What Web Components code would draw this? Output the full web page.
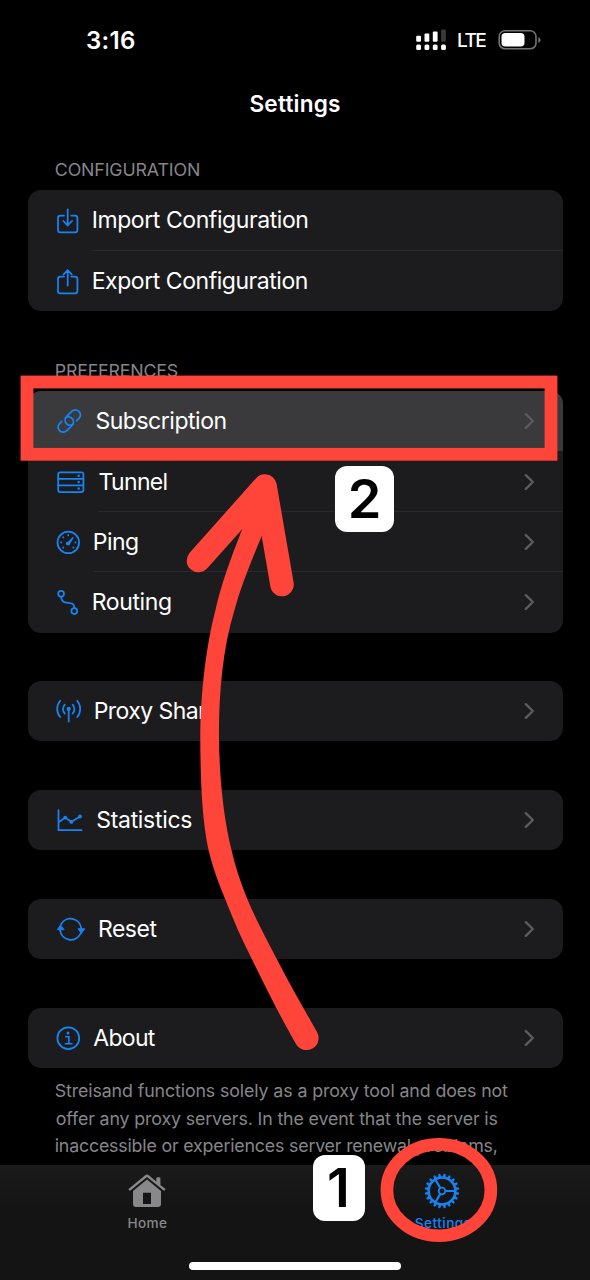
<!DOCTYPE html>
<html lang="en">
<head>
<meta charset="utf-8">
<title>Settings</title>
<style>
html,body{margin:0;background:#000}
body{width:590px;height:1280px;overflow:hidden;font-family:Inter,"Liberation Sans",sans-serif;color:#fff}
</style>
</head>
<body>
<settings-app></settings-app>
<script>
const define=(name,html,setup)=>customElements.define(name,class extends HTMLElement{
  connectedCallback(){
    if(this.shadowRoot)return;
    const t=document.createElement('template');
    t.innerHTML=typeof html==='function'?html(this):html;
    this.attachShadow({mode:'open'}).append(t.content.cloneNode(true));
    if(setup)setup(this);
  }
});

/* A single line of text tracked so that its glyphs span the given width. */
const ctx=document.createElement('canvas').getContext('2d');
define('fit-text',`<style>:host{display:block;white-space:nowrap}span{display:inline-block}</style><span><slot></slot></span>`,el=>{
  const cs=getComputedStyle(el),text=el.textContent;
  ctx.font=`${cs.fontWeight} ${cs.fontSize} ${cs.fontFamily}`;
  const m=ctx.measureText(text),ink=m.actualBoundingBoxLeft+m.actualBoundingBoxRight;
  const span=el.shadowRoot.querySelector('span');
  if(text.length>1)span.style.letterSpacing=((+el.getAttribute('width')-.9-ink)/(text.length-1))+'px';
  span.style.marginLeft=(m.actualBoundingBoxLeft+.7)+'px';
  el.style.width=el.getAttribute('width')+'px';
});

const gearTeeth=Array.from({length:20},(_,i)=>`<path d="M17.5 4.8 18.1 1.7H19.9L20.5 4.8Z" transform="rotate(${i*18+9} 19 19)"/>`).join('');
const tick=[-135,-90,-45,0,90,135].map(a=>`<circle cx="14.3" cy="8.2" r=".95" transform="rotate(${a} 14.3 15.4)" fill="currentColor" stroke="none"/>`).join('');
const icons={
 import:'<path d="M10 10.6H6.4Q4 10.6 4 13V25Q4 27.4 6.4 27.4H21Q23.4 27.4 23.4 25V13Q23.4 10.6 21 10.6H17.3M13.7 4.3V20M9.4 16 13.7 20.4 18 16"/>',
 export:'<path d="M10 10.6H6.4Q4 10.6 4 13V25Q4 27.4 6.4 27.4H21Q23.4 27.4 23.4 25V13Q23.4 10.6 21 10.6H17.3M13.7 19.6V4.2M9.6 8.4 13.7 4.2 17.8 8.4"/>',
 link:'<path transform="translate(18.7 11.5) rotate(-45)" d="M.6 5.1H3.7A5.1 5.1 0 0 0 3.7-5.1H-3.7A5.1 5.1 0 0 0-4.6 5"/><path transform="translate(11.8 18.5) rotate(135)" d="M.6 5.1H3.7A5.1 5.1 0 0 0 3.7-5.1H-3.7A5.1 5.1 0 0 0-4.6 5"/>',
 server:'<rect x="4.2" y="5.4" width="25.2" height="19.6" rx="2"/><path d="M4.2 11.9H29.4M4.2 18.3H29.4"/><g fill="currentColor" stroke="none"><circle cx="24.7" cy="8.7" r="1.25"/><circle cx="24.7" cy="15.1" r="1.25"/><circle cx="24.7" cy="21.6" r="1.25"/></g>',
 gauge:'<circle cx="14.3" cy="15.4" r="10.8"/>'+tick+'<path d="M12.6 17 19 10.6 14.8 18Z" fill="currentColor" stroke-width="1.2" stroke-linejoin="round"/><circle cx="13.5" cy="16.4" r="1.6" fill="currentColor" stroke="none"/>',
 route:'<circle cx="7.1" cy="6.7" r="2.9"/><circle cx="20.3" cy="24.1" r="2.9"/><path d="M7.2 9.8C7.4 20.5 20.2 11.2 20.5 21"/>',
 antenna:'<circle cx="14.7" cy="12.9" r="2.1" fill="currentColor" stroke="none"/><path d="M14.7 13V25.6M10.8 8.7A6.4 6.4 0 0 0 10.8 17.6M18.6 8.7A6.4 6.4 0 0 1 18.6 17.6M6.2 4.8A12.5 12.5 0 0 0 6.2 21M23.2 4.8A12.5 12.5 0 0 1 23.2 21"/>',
 chart:'<path d="M4.5 5.2V25.2H27.6M5 17 11.3 12.6 17.3 16.9 26 11.5"/><g fill="currentColor" stroke="none"><circle cx="11.3" cy="12.6" r="1.9"/><circle cx="17.3" cy="16.9" r="1.9"/><circle cx="26" cy="11.5" r="1.9"/></g>',
 reset:'<path d="M7 10.4A10.8 10.8 0 0 1 27.2 14M26.4 19.9A10.8 10.8 0 0 1 6.1 16.4"/><path d="M6.4 11.2 3.4 15.7H9.8ZM27.2 19.4 24.2 14.7H30.4Z" fill="currentColor" stroke-width=".9" stroke-linejoin="round"/>',
 info:'<circle cx="14.3" cy="15.2" r="10.9"/><circle cx="14" cy="9.9" r="1.5" fill="currentColor" stroke="none"/><path d="M11.7 13.8H14.9V20.6M11.3 20.7H18" stroke-width="1.6"/>'
};
define('row-icon',el=>`<style>:host{display:block;width:36px;height:30px;color:#1784f5}svg{display:block;overflow:visible;fill:none;stroke:currentColor;stroke-width:1.75;stroke-linecap:round}</style><svg width="36" height="30">${icons[el.getAttribute('name')]}</svg>`);

define('settings-row',el=>`<style>
:host{display:grid;grid-template-columns:26.5px var(--label) 1fr auto;align-items:center;height:60.35px;font-size:23px;line-height:30px;background:linear-gradient(#29292b,#29292b) no-repeat var(--rule,700px) 100%/100% 1px}
:host([pressed]){background:#3a3a3c}
.chev{display:block;margin-right:28px}
</style><span></span><row-icon name="${el.getAttribute('icon')}"></row-icon><fit-text width="${el.getAttribute('w')}">${el.getAttribute('label')}</fit-text>${el.hasAttribute('nav')?'<svg class="chev" width="11" height="18" fill="none" stroke="#5b5b5f" stroke-width="2.4" stroke-linecap="round" stroke-linejoin="round"><path d="M1.8 2.2 8.8 9 1.8 15.8"/></svg>':''}`,el=>{
  const x=+el.getAttribute('x');
  el.style.setProperty('--label',(x-54)+'px');
  if(el.hasAttribute('ruled'))el.style.setProperty('--rule',Math.floor(x-28.5)+'px');
});
define('settings-card',`<style>:host{display:block;margin:0 27.5px 48.65px;border-radius:13px;overflow:hidden;background:#1c1c1e}</style><slot></slot>`);
define('section-title',`<style>:host{display:block;padding-left:55.1px;height:31px;font-size:17.8px;line-height:22px;color:#86868a}</style><slot></slot>`);

define('status-bar',`<style>
:host{display:flex;height:80px;box-sizing:border-box;padding:26px 48.6px 0 86.3px;align-items:flex-start}
.time{font-size:24px;font-weight:600;line-height:29px}
.lte{font-size:19.2px;font-weight:500;line-height:29px;margin:0 12px 0 10.6px}
svg{display:block}
</style><fit-text class="time" width="49">3:16</fit-text>
<svg width="31" height="29" fill="#fff" style="margin-left:auto"><rect x=".2" y="9.8" width="4.8" height="6" rx="1"/><rect x="8.5" y="7.6" width="4.8" height="8.2" rx="1"/><rect x="16.8" y="5.6" width="4.8" height="10.2" rx="1"/><rect x="25.1" y="3.4" width="4.8" height="12.4" rx="1" fill="#38383a"/><rect x=".2" y="18.4" width="4.8" height="5.5" rx="1.5"/><rect x="8.5" y="18.4" width="4.8" height="5.5" rx="1.5"/><rect x="16.8" y="18.4" width="4.8" height="5.5" rx="1.5"/><rect x="25.1" y="18.4" width="4.8" height="5.5" rx="1.5"/></svg>
<fit-text class="lte" width="29">LTE</fit-text>
<svg width="43" height="29"><rect x="1.2" y="4.8" width="36.8" height="18" rx="5.8" fill="none" stroke="#737375" stroke-width="1.6"/><rect x="3.5" y="7" width="23" height="13.5" rx="3.8" fill="#fff"/><path d="M40.3 11Q42.6 12.2 42.6 14T40.3 17Z" fill="#737375"/></svg>`);

define('tab-item',el=>`<style>:host{display:flex;flex-direction:column;align-items:center;font-size:13.6px;font-weight:500;line-height:17px}svg{display:block;margin:0 1.4px 4.5px 0;overflow:visible}</style>${el.getAttribute('icon')==='home'?
'<svg width="38" height="38" fill="#88888a"><path d="M.8 16.8 17.2 3.2Q19 1.8 20.8 3.2L28.3 9.5V6.2Q28.3 5.2 29.3 5.2H31.4Q32.4 5.2 32.4 6.2V12.9L37.2 16.8Q37.8 17.4 37.2 18Q36.3 19 35.3 18.3L19 5.1 2.7 18.3Q1.7 19 .8 18Q.2 17.4.8 16.8Z"/><path fill-rule="evenodd" d="M19 7.6 33 19V31.7Q33 34.9 29.8 34.9H8.2Q5 34.9 5 31.7V19ZM15 20.7V32H23V20.7Z"/></svg>':
`<svg width="38" height="38" fill="currentColor"><circle cx="19" cy="19" r="13.4" fill="none" stroke="currentColor" stroke-width="2.5"/>${gearTeeth}<circle cx="19" cy="19" r="3.3" fill="none" stroke="currentColor" stroke-width="1.8"/><path d="M22.5 19H32M17.2 15.9 12.3 7.5M17.2 22.1 12.3 30.5" stroke="currentColor" stroke-width="2.2"/></svg>`}
<fit-text width="${el.getAttribute('w')}">${el.getAttribute('label')}</fit-text>`);

define('tab-bar',`<style>
:host{display:flex;flex-direction:column;height:115px;background:linear-gradient(#1a1a1a,#141414 40%,#141414)}
nav{display:grid;grid-template-columns:1fr 1fr;padding:7px 0 0;height:66px}
tab-item:first-child{color:#88888a}tab-item:last-child{color:#1784f5}
.home{width:212px;height:7.4px;border-radius:4px;background:#fff;margin:24.3px auto 0}
</style><nav><tab-item icon="home" label="Home" w="39.5"></tab-item><tab-item icon="gear" label="Settings" w="57"></tab-item></nav><div class="home"></div>`);

/* Hand-drawn guide marks floating above the screen. */
define('guide-marks',`<style>
:host{position:absolute;inset:0;width:590px;height:1280px}
svg{position:absolute;inset:0}
.key{position:absolute;display:flex;align-items:center;justify-content:center;background:#fff;color:#000;border-radius:12px;font-size:54px;font-weight:600;line-height:66px;height:66px}
.two{left:335.4px;top:466px;width:58.5px}
.one{left:313px;top:1155px;width:51.7px;height:65.5px}
</style>
<svg width="590" height="1280" fill="#ff453a">
<rect x="27" y="382" width="524" height="72.3" fill="none" stroke="#ff453a" stroke-width="12.8"/>
<path d="M198.5 560.5 265 486 282 584.5" fill="none" stroke="#ff453a" stroke-width="23.6" stroke-linecap="round" stroke-linejoin="round"/>
<path d="M255 498 242.7 528C230 560 221 585 215.5 610C207 642 200.3 690 200.3 740C200.4 775 201.5 817 208.5 850C212.5 867 218.5 883 225.5 900C233 919 242 940 252.3 960C265 986 281 1018 296 1044A12 12 0 0 0 317 1032C304 1009 290 985 277.3 960C267 940 256 920 247.3 899C240.5 882 235 866 231.5 850C224 820 219.5 780 219 740C218.5 700 222 650 234.5 610C241 586 251 562 261.7 536L276 500Z"/>
<ellipse cx="438.9" cy="1190" rx="52" ry="45.7" fill="none" stroke="#ff453a" stroke-width="12.6"/>
</svg>
<div class="key two"><fit-text width="29">2</fit-text></div><div class="key one"><fit-text width="21">1</fit-text></div>`);

define('settings-app',`<style>
:host{display:flex;flex-direction:column;position:relative;width:590px;height:1280px;background:#000;overflow:hidden}
header{display:flex;justify-content:center;height:79.3px;box-sizing:border-box;padding-top:10px;font-size:22.6px;font-weight:600;line-height:28px}
main{flex:1;min-height:0;overflow:hidden}
settings-card+section-title{height:31.5px}
settings-card.about{margin-bottom:9px}
footer{padding-left:55px;font-size:17.8px;line-height:27.5px;color:#86868a}
</style>
<status-bar></status-bar>
<header><fit-text width="90.5">Settings</fit-text></header>
<main>
<section-title><fit-text width="144">CONFIGURATION</fit-text></section-title>
<settings-card><settings-row icon="import" label="Import Configuration" x="93" w="214.5" ruled></settings-row><settings-row icon="export" label="Export Configuration" x="93" w="214"></settings-row></settings-card>
<section-title><fit-text width="122.8">PREFERENCES</fit-text></section-title>
<settings-card><settings-row pressed nav icon="link" label="Subscription" x="95.7" w="130"></settings-row><settings-row nav icon="server" label="Tunnel" x="98.8" w="68" ruled></settings-row><settings-row nav icon="gauge" label="Ping" x="94.1" w="44" ruled></settings-row><settings-row nav icon="route" label="Routing" x="93" w="78.2"></settings-row></settings-card>
<settings-card><settings-row nav icon="antenna" label="Proxy Share" x="95" w="124"></settings-row></settings-card>
<settings-card><settings-row nav icon="chart" label="Statistics" x="96.6" w="94.8"></settings-row></settings-card>
<settings-card><settings-row nav icon="reset" label="Reset" x="99.2" w="58.5"></settings-row></settings-card>
<settings-card class="about"><settings-row nav icon="info" label="About" x="92.6" w="63.4"></settings-row></settings-card>
<footer><fit-text width="453.3">Streisand functions solely as a proxy tool and does not</fit-text><fit-text width="442.7">offer any proxy servers. In the event that the server is</fit-text><fit-text width="442">inaccessible or experiences server renewal problems,</fit-text></footer>
</main>
<tab-bar></tab-bar>
<guide-marks></guide-marks>`);
</script>
</body>
</html>
